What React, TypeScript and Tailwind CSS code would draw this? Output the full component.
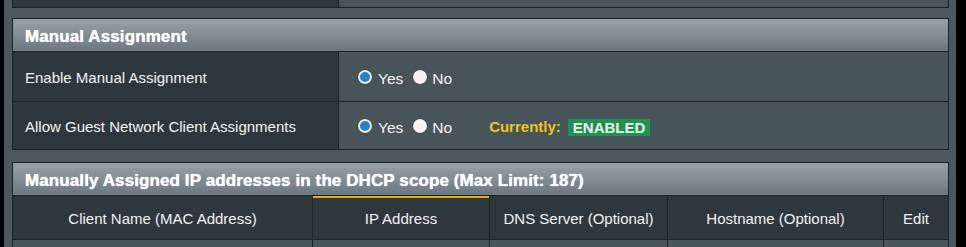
import React from 'react'

function Radio({ checked }: { checked?: boolean }) {
  return checked ? (
    <span className="inline-block w-[14px] h-[14px] rounded-full bg-[#2b7fc2] border-2 border-[#e8eef2] shadow-[0_0_1px_#000]" />
  ) : (
    <span className="inline-block w-[14px] h-[14px] rounded-full bg-[#f4f4f4] shadow-[0_0_1px_#000]" />
  )
}

function YesNo() {
  return (
    <div className="flex items-center">
      <Radio checked />
      <span className="ml-[6px] mt-[4px] text-[15.5px]">Yes</span>
      <span className="ml-[10px] flex items-center">
        <Radio />
      </span>
      <span className="ml-[5px] mt-[4px] text-[15.5px]">No</span>
    </div>
  )
}

const headerCls =
  'shrink-0 h-[34px] flex items-center px-[12px] pt-[3px] bg-gradient-to-b from-[#97a2a7] to-[#6c787d] border border-[#1c2326] text-white font-bold text-[17px] tracking-[0.1px] [text-shadow:0_0_1px_#fff]'

export default function App() {
  const cols = [
    { label: 'Client Name (MAC Address)', w: 'w-[300px]' },
    { label: 'IP Address', w: 'w-[177px]', active: true },
    { label: 'DNS Server (Optional)', w: 'w-[178px]' },
    { label: 'Hostname (Optional)', w: 'w-[216px]' },
    { label: 'Edit', w: 'flex-1' },
  ]

  return (
    <div className="w-[966px] h-[247px] flex overflow-hidden bg-black text-[15px] text-[#f2f2f2] font-['Liberation_Sans',Arial,sans-serif]">
      <div className="w-[4px] bg-black" />
      <div className="w-[952px] bg-[#4c585d] pl-[8px] pr-[7px] flex flex-col overflow-hidden">
        {/* previous table tail */}
        <div className="shrink-0 h-[8px] flex border-x border-b border-[#1c2326]">
          <div className="w-[326px] bg-[#2e383c] border-r border-[#1c2326]" />
          <div className="flex-1 bg-[#475459]" />
        </div>

        {/* Manual Assignment */}
        <div className="shrink-0 mt-[10px] flex flex-col">
          <div className={headerCls}>Manual Assignment</div>
          <div className="shrink-0 h-[50px] flex border-x border-b border-[#1c2326]">
            <div className="w-[326px] bg-[#2e383c] border-r border-[#1c2326] flex items-center pl-[12px] pt-[3px]">
              Enable Manual Assignment
            </div>
            <div className="flex-1 bg-[#475459] flex items-center pl-[19px]">
              <YesNo />
            </div>
          </div>
          <div className="shrink-0 h-[48px] flex border-x border-b border-[#1c2326]">
            <div className="w-[326px] bg-[#2e383c] border-r border-[#1c2326] flex items-center pl-[12px] pt-[3px]">
              Allow Guest Network Client Assignments
            </div>
            <div className="flex-1 bg-[#475459] flex items-center pl-[19px]">
              <YesNo />
              <span className="ml-[37px] mt-[3px] font-bold text-[#f0c419]">Currently:</span>
              <span className="ml-[7px] mt-[3px] px-[5px] h-[17px] leading-[17px] bg-[#1f9150] font-bold text-[#eaf5ee]">
                ENABLED
              </span>
            </div>
          </div>
        </div>

        {/* Manually Assigned list */}
        <div className="shrink-0 mt-[12px] flex flex-col">
          <div className={headerCls}>Manually Assigned IP addresses in the DHCP scope (Max Limit: 187)</div>
          <div className="shrink-0 h-[44px] flex border-x border-b border-[#1c2326] bg-[#2e383c]">
            {cols.map((c, i) => (
              <div
                key={c.label}
                className={`${c.w} flex items-center justify-center pt-[3px] ${i < cols.length - 1 ? 'border-r border-[#1c2326]' : ''} ${c.active ? 'shadow-[inset_0_2px_0_#d9b21c]' : ''}`}
              >
                {c.label}
              </div>
            ))}
          </div>
          <div className="shrink-0 h-[20px] flex border-x border-[#1c2326] bg-[#475459]">
            {cols.map((c, i) => (
              <div key={c.label} className={`${c.w} ${i < cols.length - 1 ? 'border-r border-[#1c2326]' : ''}`} />
            ))}
          </div>
        </div>
      </div>
      <div className="flex-1 bg-black" />
    </div>
  )
}
